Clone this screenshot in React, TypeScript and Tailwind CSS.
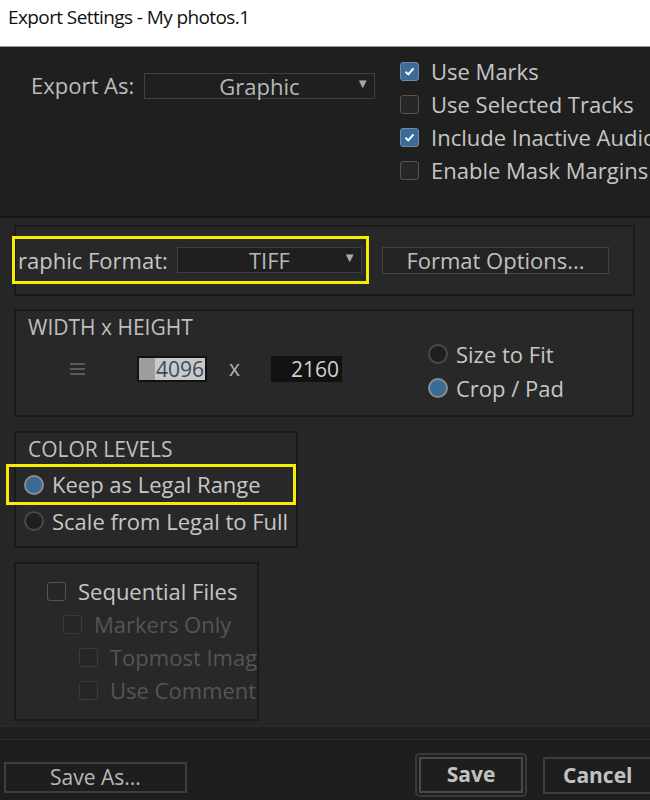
import { ReactNode } from "react"

const font = { fontFamily: '"Open Sans", "Noto Sans", sans-serif' }

const Check = ({ on, dim, label }: { on?: boolean; dim?: boolean; label: string }) => (
  <div className="flex items-center h-[33px] whitespace-nowrap">
    <span
      className={`w-[19px] h-[19px] rounded-[3px] border flex items-center justify-center shrink-0 ${
        on ? "bg-[#3d6b97] border-[#6d8aa6]" : dim ? "bg-[#262626] border-[#3a3a3a]" : "bg-[#272727] border-[#555]"
      }`}
    >
      {on && (
        <svg width="13" height="13" viewBox="0 0 13 13">
          <path d="M2.5 6.8 L5.3 9.4 L10.5 3.3" stroke="#fff" strokeWidth="2" fill="none" />
        </svg>
      )}
    </span>
    <span className={`ml-[12px] text-[22px] ${dim ? "text-[#555]" : "text-[#c6c6c6]"}`}>{label}</span>
  </div>
)

const Radio = ({ on, label }: { on?: boolean; label: string }) => (
  <div className="flex items-center h-[34px] whitespace-nowrap">
    <span
      className={`w-[20px] h-[20px] rounded-full border-2 flex items-center justify-center shrink-0 ${
        on ? "border-[#8c8c8c] bg-[#3a6a98]" : "border-[#4a4a4a] bg-[#1f1f1f]"
      }`}
    />
    <span className="ml-[8px] text-[22px] text-[#c6c6c6]">{label}</span>
  </div>
)

const Dropdown = ({ value, w }: { value: string; w: string }) => (
  <div className={`relative ${w} h-[26px] border border-[#3f3f3f] bg-[#1f1f1f] flex items-center justify-center`}>
    <span className="text-[22px] text-[#b8b8b8] leading-none">{value}</span>
    <span className="absolute right-[5px] top-[1px] text-[13px] leading-[16px] text-[#a8a8a8]">▼</span>
  </div>
)

const Panel = ({ className, children }: { className: string; children: ReactNode }) => (
  <div className={`border-2 border-[#1a1a1a] bg-[#282828] ${className}`}>{children}</div>
)

export default function App() {
  return (
    <div style={font} className="w-[650px] h-[800px] overflow-hidden flex flex-col bg-[#262626]">
      {/* title bar */}
      <div className="h-[47px] shrink-0 bg-white border-b border-[#9a9a9a] pl-[8px] pt-[3px]">
        <span className="text-[19px] tracking-[-0.6px] text-[#111] whitespace-nowrap">Export Settings - My photos.1</span>
      </div>

      {/* export options */}
      <div className="h-[171px] shrink-0 bg-[#1f1f1f] border-b-2 border-[#191919] flex overflow-hidden">
        <div className="ml-[31px] mt-[25px] flex items-center h-[27px] shrink-0">
          <span className="w-[113px] text-[22px] text-[#bdbdbd]">Export As:</span>
          <Dropdown value="Graphic" w="w-[231px]" />
        </div>
        <div className="ml-[25px] mt-[8px] flex flex-col shrink-0">
          <Check on label="Use Marks" />
          <Check label="Use Selected Tracks" />
          <Check on label="Include Inactive Audio" />
          <Check label="Enable Mask Margins" />
        </div>
      </div>

      <div className="flex-1 flex flex-col pl-[14px]">
        {/* format */}
        <Panel className="mt-[7px] w-[621px] h-[71px] pt-[9px]">
          <div className="flex items-center">
            <div className="-ml-[4px] w-[357px] h-[48px] border-[3px] border-[#f5ee00] flex items-center pl-[3px] overflow-hidden">
              <span className="w-[159px] text-[22px] text-[#c6c6c6] whitespace-nowrap">raphic Format:</span>
              <Dropdown value="TIFF" w="w-[185px]" />
            </div>
            <div className="ml-[13px] w-[227px] h-[27px] border border-[#434343] bg-[#232323] flex items-center justify-center text-[22px] text-[#c0c0c0] whitespace-nowrap">
              Format Options...
            </div>
          </div>
        </Panel>

        {/* size */}
        <Panel className="mt-[13px] w-[620px] h-[108px] pl-[12px] pt-[2px]">
          <div className="text-[21px] text-[#bfbfbf] leading-[28px]">WIDTH x HEIGHT</div>
          <div className="flex">
            <div className="flex items-center mt-[15px] h-[26px]">
              <svg width="15" height="14" viewBox="0 0 15 14" className="ml-[42px]">
                <rect x="0" y="1" width="15" height="2" fill="#5a5a5a" />
                <rect x="0" y="6" width="15" height="2" fill="#5a5a5a" />
                <rect x="0" y="11" width="15" height="2" fill="#5a5a5a" />
              </svg>
              <div className="ml-[52px] w-[70px] h-[26px] border-2 border-[#111] bg-[#c9c9c9] flex">
                <span className="w-[16px] bg-[#9d9d9d]" />
                <span className="flex-1 text-right pr-[1px] text-[21px] text-[#3b4b5e] leading-[22px]">4096</span>
              </div>
              <span className="ml-[22px] text-[21px] text-[#aab6c4]">x</span>
              <div className="ml-[31px] w-[71px] h-[26px] bg-[#121212] text-right pr-[3px] text-[21px] text-[#d0d0d0] leading-[26px]">
                2160
              </div>
            </div>
            <div className="ml-[86px] -mt-[4px] flex flex-col">
              <Radio label="Size to Fit" />
              <Radio on label="Crop / Pad" />
            </div>
          </div>
        </Panel>

        {/* color levels */}
        <Panel className="mt-[14px] w-[284px] h-[117px] pl-[12px] pt-[2px]">
          <div className="text-[21px] text-[#bfbfbf] leading-[28px]">COLOR LEVELS</div>
          <div className="-ml-[22px] mt-[1px] w-[290px] h-[41px] border-[3px] border-[#f5ee00] flex items-center pl-[15px]">
            <Radio on label="Keep as Legal Range" />
          </div>
          <div className="-ml-[4px] -mt-[1px] whitespace-nowrap">
            <Radio label="Scale from Legal to Full" />
          </div>
        </Panel>

        {/* sequence options */}
        <Panel className="mt-[14px] w-[245px] h-[159px] pt-[11px] overflow-hidden">
          <div className="pl-[31px]">
            <Check label="Sequential Files" />
          </div>
          <div className="pl-[47px]">
            <Check dim label="Markers Only" />
          </div>
          <div className="pl-[63px]">
            <Check dim label="Topmost Image" />
            <Check dim label="Use Comment" />
          </div>
        </Panel>

        <div className="mt-[5px] -ml-[14px] h-[14px] bg-[#202020] border-t border-[#1a1a1a] border-b border-[#2b2b2b]" />

        {/* footer */}
        <div className="-ml-[14px] flex-1 bg-[#1e1e1e] relative whitespace-nowrap">
          <div className="absolute left-[4px] top-[22px] w-[183px] h-[31px] border-2 border-[#3e3e3e] flex items-center justify-center text-[21px] text-[#b8b8b8]">
            Save As...
          </div>
          <div className="absolute left-[415px] top-[13px] w-[112px] h-[44px] rounded-[5px] border-2 border-[#3a3a3a] p-[2px]">
            <div className="w-full h-full border-2 border-[#4a4a4a] flex items-center justify-center text-[21px] font-bold text-[#c2c2c2]">
              Save
            </div>
          </div>
          <div className="absolute left-[543px] top-[17px] w-[120px] h-[37px] border-2 border-[#3e3e3e] flex items-center pl-[18px] text-[21px] font-bold text-[#c2c2c2]">
            Cancel
          </div>
        </div>
      </div>
    </div>
  )
}
